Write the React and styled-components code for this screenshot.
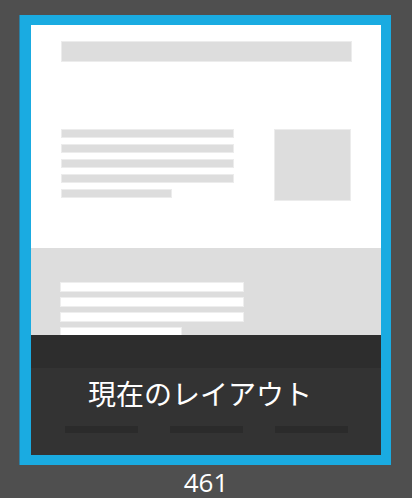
import styled, { createGlobalStyle } from 'styled-components';

const GlobalStyle = createGlobalStyle`
  html, body {
    margin: 0;
    padding: 0;
    background: #4f4f4f;
  }
  body {
    font-family: 'Open Sans', 'Noto Sans CJK JP', sans-serif;
  }
`;

const Page = styled.div`
  width: 412px;
  min-height: 498px;
  display: flex;
  flex-direction: column;
  align-items: center;
  padding-top: 15px;
  box-sizing: border-box;
`;

const Frame = styled.div`
  margin-left: -1px;
  width: 350px;
  height: 430px;
  border: 10px solid #1aabe1;
  border-left-width: 11px;
  box-shadow: -1px 0 0 #2b7fa3;
  background: #ffffff;
  position: relative;
  overflow: hidden;
`;

const Header = styled.div`
  padding: 17px 30px 0 31px;
  height: 88px;
`;

const Bar = styled.div`
  height: 19px;
  background: #dddddd;
  box-shadow: 0 0 0 1px #ececec;
`;

const Body = styled.div`
  display: flex;
  justify-content: space-between;
  padding: 0 31px 0 31px;
  height: 118px;
`;

const Lines = styled.div`
  display: flex;
  flex-direction: column;
  gap: ${(p) => p.gap}px;
`;

const Line = styled.div`
  width: ${(p) => p.w}px;
  height: ${(p) => p.h}px;
  background: ${(p) => p.color};
  box-shadow: 0 0 0 1px ${(p) => p.edge};
`;

const Thumb = styled.div`
  width: 75px;
  height: 70px;
  background: #dddddd;
  box-shadow: 0 0 0 1px #ececec;
`;

const Section = styled.div`
  background: #dddddd;
  height: 207px;
  padding: 35px 0 0 30px;
  box-sizing: border-box;
`;

const Overlay = styled.div`
  position: absolute;
  left: 0;
  right: 0;
  bottom: 0;
  height: 120px;
  background: #333333;
  display: flex;
  flex-direction: column;
`;

const Band = styled.div`
  height: 33px;
  background: #2d2d2d;
`;

const Caption = styled.div`
  margin-top: 7px;
  padding-right: 12px;
  text-align: center;
  color: #ffffff;
  font-family: 'Noto Sans CJK JP', sans-serif;
  font-size: 28px;
  line-height: 36px;
`;

const Footer = styled.div`
  display: flex;
  justify-content: space-between;
  padding: 0 33px 0 34px;
  margin-top: 15px;
`;

const FootBar = styled.div`
  width: 73px;
  height: 7px;
  background: #2b2b2b;
`;

const Count = styled.div`
  margin-top: 4px;
  color: #ffffff;
  font-family: 'Open Sans', sans-serif;
  font-weight: 500;
  font-size: 26px;
  line-height: 26px;
`;

const textLines = [171, 171, 171, 171, 109];
const sectionLines = [182, 182, 182, 120];

export default function App() {
  return (
    <>
      <GlobalStyle />
      <Page>
        <Frame>
          <Header>
            <Bar />
          </Header>
          <Body>
            <Lines gap={8}>
              {textLines.map((w, i) => (
                <Line key={i} w={w} h={7} color="#dddddd" edge="#ececec" />
              ))}
            </Lines>
            <Thumb />
          </Body>
          <Section>
            <Lines gap={7}>
              {sectionLines.map((w, i) => (
                <Line key={i} w={w} h={8} color="#ffffff" edge="#eeeeee" />
              ))}
            </Lines>
          </Section>
          <Overlay>
            <Band />
            <Caption>現在のレイアウト</Caption>
            <Footer>
              <FootBar />
              <FootBar />
              <FootBar />
            </Footer>
          </Overlay>
        </Frame>
        <Count>461</Count>
      </Page>
    </>
  );
}
